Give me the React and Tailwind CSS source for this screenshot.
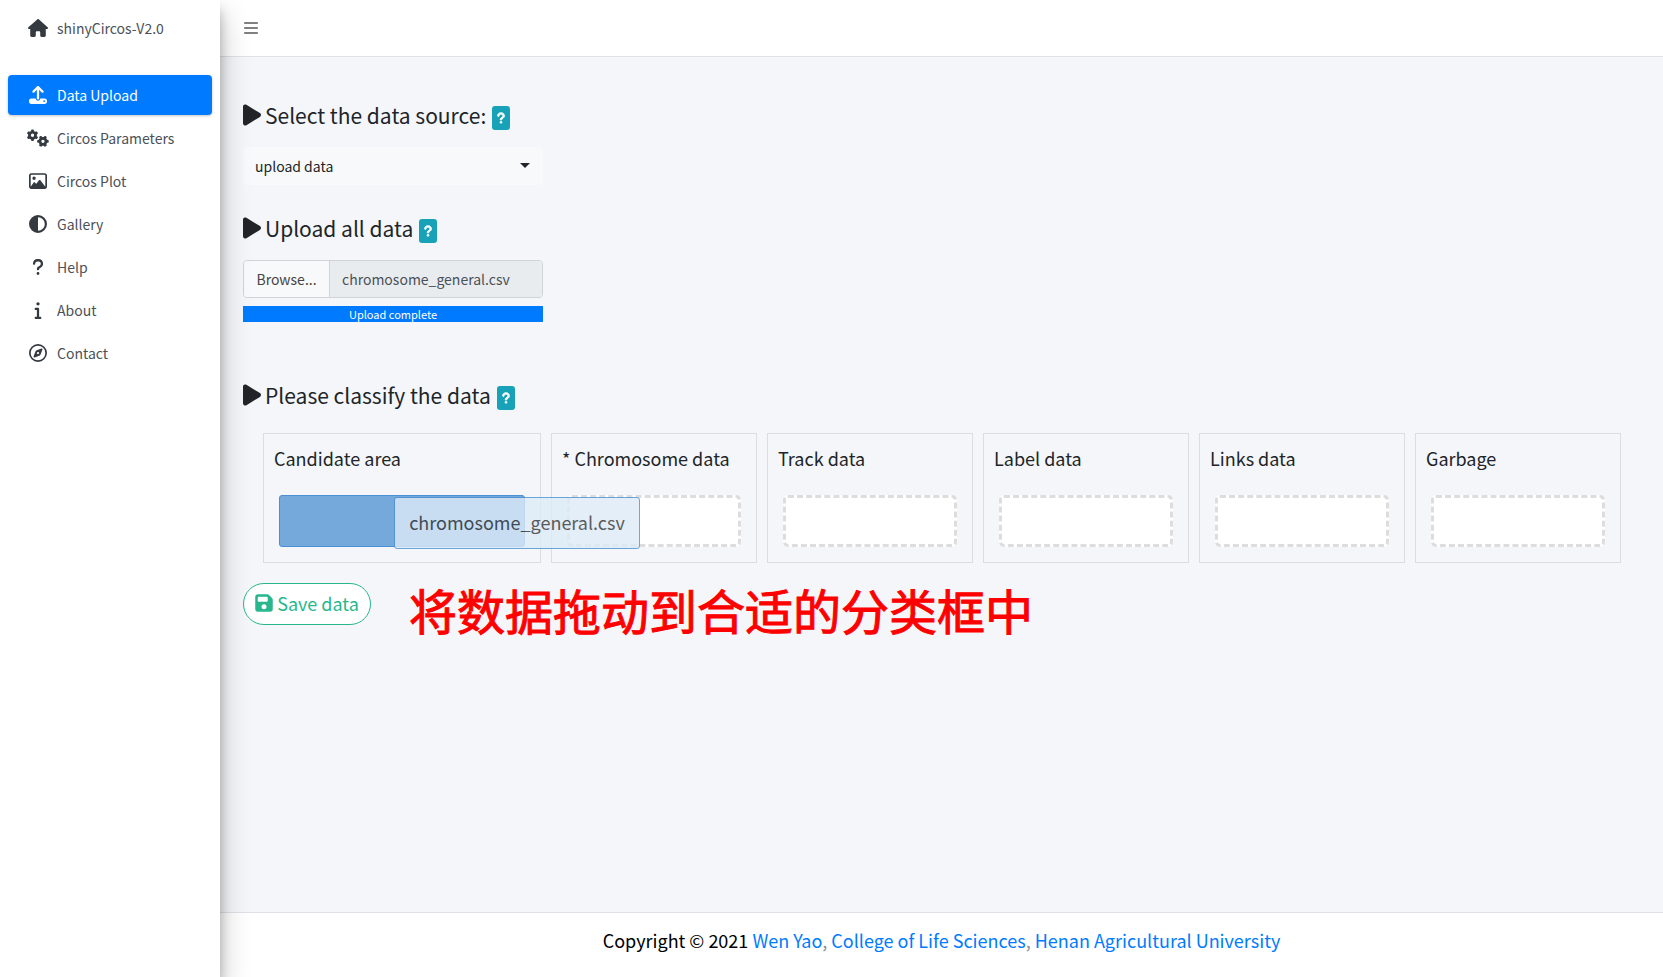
import React from "react";
import {
  FaHouse, FaUpload, FaGears, FaRegImage, FaCircleHalfStroke, FaQuestion,
  FaInfo, FaRegCompass, FaPlay, FaFloppyDisk, FaBars,
} from "react-icons/fa6";

const NAV = [
  { label: "Data Upload", icon: FaUpload, active: true },
  { label: "Circos Parameters", icon: FaGears },
  { label: "Circos Plot", icon: FaRegImage },
  { label: "Gallery", icon: FaCircleHalfStroke },
  { label: "Help", icon: FaQuestion },
  { label: "About", icon: FaInfo },
  { label: "Contact", icon: FaRegCompass },
];

const TARGETS = ["* Chromosome data", "Track data", "Label data", "Links data", "Garbage"];

function SectionTitle({ children }) {
  return (
    <h3 className="flex h-8 items-center text-[21px] leading-8 text-[#212529]">
      <FaPlay className="mr-1 h-6 w-[18px]" />
      {children}
      <button type="button" aria-label="More information" className="mt-[6px] ml-[6px] flex h-6 w-[18px] items-center justify-center rounded-[3px] bg-[#17a2b8] text-white">
        <FaQuestion className="h-3 w-3 stroke-current stroke-[40]" />
      </button>
    </h3>
  );
}

function Sidebar() {
  return (
    <aside className="z-10 flex w-[220px] shrink-0 flex-col bg-white shadow-[0_14px_28px_rgba(0,0,0,0.25),0_10px_10px_rgba(0,0,0,0.22)]">
      <a href="#home" className="flex h-14 items-center pl-[26px] text-[14px] text-[#4b5157]">
        <span className="flex w-6 justify-center text-[#343a40]"><FaHouse className="h-[18px] w-5" /></span>
        <span className="ml-[7px]">shinyCircos-V2.0</span>
      </a>
      <nav className="mt-[19px] flex flex-col gap-[3px] px-2">
        {NAV.map(({ label, icon: Icon, active }) => (
          <a
            key={label}
            href={"#" + label.toLowerCase().replace(" ", "-")}
            className={
              active
                ? "flex h-10 items-center rounded bg-[#007bff] pl-[18px] text-[14px] text-white shadow-[0_1px_3px_rgba(0,0,0,0.24)]"
                : "flex h-10 items-center rounded pl-[18px] text-[14px] text-[#4b5157]"
            }
          >
            <span className={active ? "flex w-6 justify-center text-white" : "flex w-6 justify-center text-[#343a40]"}>
              <Icon className="h-[18px] w-[22px]" />
            </span>
            <span className="ml-[7px]">{label}</span>
          </a>
        ))}
      </nav>
    </aside>
  );
}

export default function App() {
  return (
    <div className="flex min-h-screen bg-[#f4f6f9] font-['Noto_Sans_CJK_SC',sans-serif] text-[#212529]">
      <Sidebar />
      <div className="flex min-w-0 flex-1 flex-col">
        <header className="flex h-[57px] items-center border-b border-[#dee2e6] bg-white pl-6">
          <button type="button" aria-label="Toggle sidebar" className="text-[#808080]"><FaBars className="h-4 w-[14px]" /></button>
        </header>

        <main className="flex-1 pr-[42px] pl-[23px]">
          <section className="mt-[42px]">
            <SectionTitle>Select the data source:</SectionTitle>
            <div className="relative mt-4 w-[300px]">
              <select aria-label="Data source" className="h-[38px] w-full appearance-none rounded bg-[#f8f9fa] px-3 text-[14px] text-[#212529]">
                <option>upload data</option>
              </select>
              <svg viewBox="0 0 10 5" className="pointer-events-none absolute top-4 right-[13px] h-[5px] w-[10px] fill-[#212529]"><path d="M0 0h10L5 5z" /></svg>
            </div>
          </section>

          <section className="mt-[27px]">
            <SectionTitle>Upload all data</SectionTitle>
            <div className="mt-4 flex h-[38px] w-[300px] overflow-hidden rounded border border-[#ced4da]">
              <button type="button" className="w-[86px] border-r border-[#ced4da] bg-[#f8f9fa] text-[14px] text-[#444444]">Browse...</button>
              <input type="text" readOnly aria-label="Uploaded file" value="chromosome_general.csv" className="min-w-0 flex-1 bg-[#e9ecef] px-3 text-[14px] text-[#495057]" />
            </div>
            <div role="progressbar" aria-label="Upload" aria-valuenow={100} className="mt-2 flex h-4 w-[300px] items-center justify-center bg-[#007bff] text-[11px] leading-[14px] text-white">Upload complete</div>
          </section>

          <section className="mt-[57px]">
            <SectionTitle>Please classify the data</SectionTitle>
            <div className="mt-[22px] ml-5 flex h-[130px] gap-[10px]">
              <div className="relative w-[278px] shrink-0 border border-[#dddddd] px-[10px] pt-2">
                <p className="h-8 text-[18px] leading-8">Candidate area</p>
                <div className="mx-[5px] mt-[21px] h-[52px] rounded-[3px] border border-[#4a90d2] bg-[#76a9db]" />
                <div className="absolute top-[63px] left-[130px] z-10 flex h-[52px] w-[246px] items-center justify-center rounded-[3px] border border-[#4a90d2] bg-[#ddebf7] pb-[2px] text-[18px] text-[#333333] opacity-80">chromosome_general.csv</div>
              </div>
              {TARGETS.map((title) => (
                <div key={title} className="min-w-0 flex-1 border border-[#dddddd] px-[10px] pt-2">
                  <p className="h-8 text-[18px] leading-8 whitespace-nowrap">{title}</p>
                  <div className="mx-[5px] mt-[21px] h-[52px] rounded-[5px] border-3 border-dashed border-[#dddddd] bg-white" />
                </div>
              ))}
            </div>
          </section>

          <div className="mt-5 flex items-start">
            <button type="button" className="flex h-[42px] w-32 items-center justify-center gap-1 rounded-full border border-[#28b78d] bg-white pb-[2px] text-[18px] text-[#28b78d]">
              <FaFloppyDisk className="h-5 w-[18px]" />
              Save data
            </button>
            <p className="ml-[38px] text-[48px] leading-[52px] text-[#ff0000] [-webkit-text-stroke:1px_#ff0000]">将数据拖动到合适的分类框中</p>
          </div>
        </main>

        <footer className="flex h-[65px] items-center justify-center border-t border-[#dee2e6] bg-white pb-[10px] text-[18px] text-[#869099]">
          <p>
            <span className="text-black">Copyright © 2021 </span>
            <a href="#author" className="text-[#007bff]">Wen Yao</a>, <a href="#college" className="text-[#007bff]">College of Life Sciences</a>, <a href="#university" className="text-[#007bff]">Henan Agricultural University</a>
          </p>
        </footer>
      </div>
    </div>
  );
}
